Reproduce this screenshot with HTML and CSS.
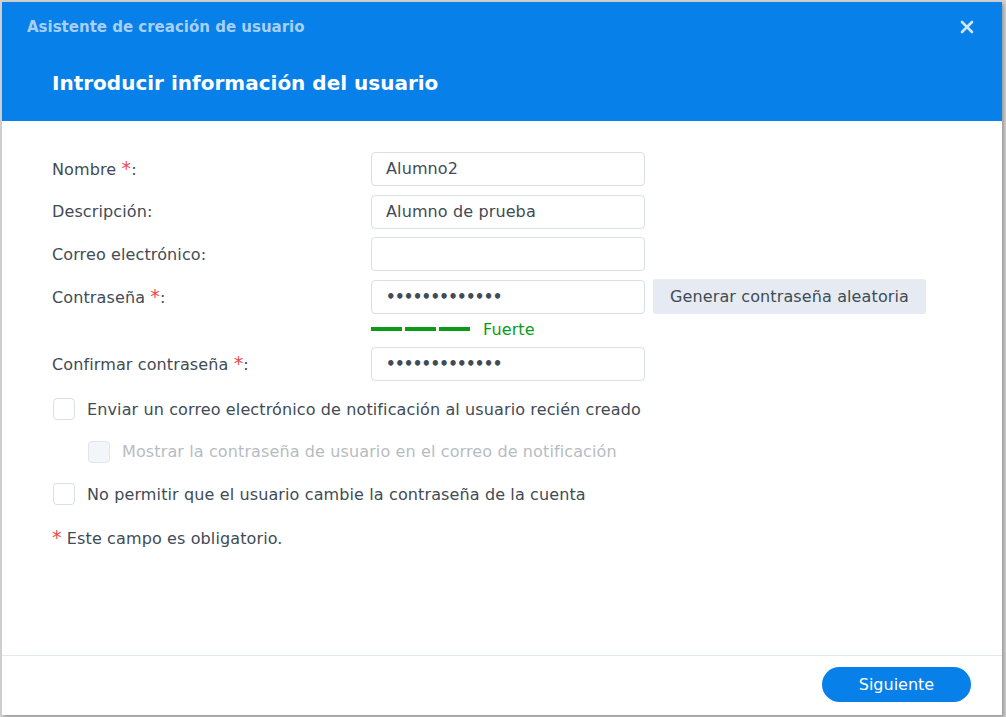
FILE: index.html
```html
<!DOCTYPE html>
<html lang="es">
<head>
<meta charset="utf-8">
<title>Asistente de creación de usuario</title>
<link rel="stylesheet" href="styles.css">
</head>
<body>
<div class="dialog">
  <div class="header">
    <div class="title-bar">
      <span class="title">Asistente de creación de usuario</span>
      <span class="close" aria-label="Cerrar">
        <svg width="14" height="14" viewBox="0 0 14 14"><path d="M2 2 L12 12 M12 2 L2 12" stroke="#cfe5fb" stroke-width="2.6" stroke-linecap="round"/></svg>
      </span>
    </div>
    <h1 class="heading">Introducir información del usuario</h1>
  </div>
  <div class="content">
    <div class="row">
      <label class="label">Nombre <span class="req">*</span>:</label>
      <div class="input">Alumno2</div>
    </div>
    <div class="row">
      <label class="label">Descripción:</label>
      <div class="input">Alumno de prueba</div>
    </div>
    <div class="row">
      <label class="label">Correo electrónico:</label>
      <div class="input"></div>
    </div>
    <div class="row">
      <label class="label">Contraseña <span class="req">*</span>:</label>
      <div class="input pw">•••••••••••••</div>
      <button class="gen">Generar contraseña aleatoria</button>
    </div>
    <div class="strength">
      <span class="bar"></span><span class="bar"></span><span class="bar"></span>
      <span class="strong">Fuerte</span>
    </div>
    <div class="row">
      <label class="label">Confirmar contraseña <span class="req">*</span>:</label>
      <div class="input pw">•••••••••••••</div>
    </div>
    <div class="checks">
      <div class="check"><span class="box"></span><span>Enviar un correo electrónico de notificación al usuario recién creado</span></div>
      <div class="check sub disabled"><span class="box"></span><span>Mostrar la contraseña de usuario en el correo de notificación</span></div>
      <div class="check"><span class="box"></span><span>No permitir que el usuario cambie la contraseña de la cuenta</span></div>
    </div>
    <p class="note"><span class="req">*</span> Este campo es obligatorio.</p>
  </div>
  <div class="footer">
    <button class="next">Siguiente</button>
  </div>
</div>
</body>
</html>
```
FILE: styles.css
```css
* { box-sizing: border-box; }
html, body { margin: 0; padding: 0; }
body {
  background: #cfcfcf;
  font-family: "DejaVu Sans", Verdana, sans-serif;
  color: #414b55;
  height: 717px;
  overflow: hidden;
}
.dialog {
  margin: 2px 4px 0 2px;
  width: 1000px;
  height: 713px;
  background: #fff;
  display: flex;
  flex-direction: column;
  box-shadow: 2px 2px 3px rgba(0,0,0,0.25);
}
.header {
  background: #0780ea;
  height: 119px;
  padding: 0 0 0 25px;
}
.title-bar {
  display: flex;
  align-items: center;
  justify-content: space-between;
  height: 50px;
  padding-right: 28px;
}
.title {
  font-size: 15px;
  font-weight: bold;
  color: #a8d0f7;
}
.close { display: flex; }
.heading {
  margin: 4px 0 0 25px;
  font-size: 20px;
  font-weight: bold;
  color: #fff;
  line-height: 54px;
}
.content {
  flex: 1;
  padding: 31px 0 0 50px;
  font-size: 16px;
  letter-spacing: 0.12px;
}
.row {
  display: flex;
  align-items: center;
  height: 34px;
  margin-bottom: 8.5px;
}
.label {
  width: 319px;
}
.req {
  color: #f04848;
  font-size: 19px;
  line-height: 1;
}
.input {
  width: 274px;
  height: 34px;
  border: 1px solid #d7dfea;
  border-radius: 4px;
  padding: 0 14px;
  line-height: 32px;
  color: #414b55;
}
.input.pw {
  font-size: 15px;
  font-weight: bold;
  letter-spacing: -0.7px;
}
.gen {
  margin-left: 8px;
  width: 273px;
  height: 35px;
  border: none;
  border-radius: 3px;
  background: #e6ebf3;
  font-family: inherit;
  font-size: 16px;
  letter-spacing: 0.12px;
  color: #414b55;
}
.strength {
  display: flex;
  align-items: center;
  margin: -4px 0 0 319px;
  height: 22px;
  margin-bottom: 7px;
}
.bar {
  width: 31px;
  height: 4px;
  background: #0c9b18;
  margin-right: 3px;
}
.strong {
  margin-left: 10px;
  color: #0c9b18;
}
.checks { margin-top: 17px; }
.check {
  display: flex;
  align-items: center;
  height: 22px;
  margin-bottom: 20.5px;
}
.box {
  width: 22px;
  height: 22px;
  border: 1px solid #d7dfea;
  border-radius: 4px;
  margin: 0 12px 0 1px;
  background: #fff;
}
.check.sub { margin-left: 35px; }
.check.disabled { color: #b7bcc2; }
.check.disabled .box { background: #f2f5f9; border-color: #e1e6ee; }
.note {
  margin: 23px 0 0 0;
}
.footer {
  border-top: 1px solid #e3e8ef;
  height: 60px;
  display: flex;
  justify-content: flex-end;
  align-items: flex-start;
  padding: 11px 31px 0 0;
}
.next {
  width: 149px;
  height: 35px;
  border: none;
  border-radius: 18px;
  background: #0780ea;
  color: #fff;
  font-family: inherit;
  font-size: 16px;
}
```
